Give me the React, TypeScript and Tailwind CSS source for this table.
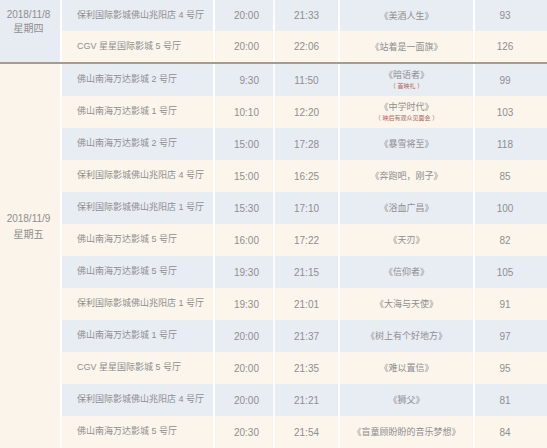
import React from "react";

type Row = {
  cinema: string;
  start: string;
  end: string;
  film: string;
  sub?: string;
  mins: string;
};

const g1: Row[] = [
  { cinema: "保利国际影城佛山兆阳店 4 号厅", start: "20:00", end: "21:33", film: "《美酒人生》", mins: "93" },
  { cinema: "CGV 星星国际影城 5 号厅", start: "20:00", end: "22:06", film: "《站着是一面旗》", mins: "126" },
];

const g2: Row[] = [
  { cinema: "佛山南海万达影城 2 号厅", start: "9:30", end: "11:50", film: "《暗语者》", sub: "（ 首映礼 ）", mins: "99" },
  { cinema: "佛山南海万达影城 1 号厅", start: "10:10", end: "12:20", film: "《中学时代》", sub: "（ 映后有观众见面会 ）", mins: "103" },
  { cinema: "佛山南海万达影城 2 号厅", start: "15:00", end: "17:28", film: "《暴雪将至》", mins: "118" },
  { cinema: "保利国际影城佛山兆阳店 4 号厅", start: "15:00", end: "16:25", film: "《奔跑吧，刚子》", mins: "85" },
  { cinema: "保利国际影城佛山兆阳店 1 号厅", start: "15:30", end: "17:10", film: "《浴血广昌》", mins: "100" },
  { cinema: "佛山南海万达影城 5 号厅", start: "16:00", end: "17:22", film: "《天刃》", mins: "82" },
  { cinema: "佛山南海万达影城 5 号厅", start: "19:30", end: "21:15", film: "《信仰者》", mins: "105" },
  { cinema: "保利国际影城佛山兆阳店 1 号厅", start: "19:30", end: "21:01", film: "《大海与天使》", mins: "91" },
  { cinema: "佛山南海万达影城 1 号厅", start: "20:00", end: "21:37", film: "《树上有个好地方》", mins: "97" },
  { cinema: "CGV 星星国际影城 5 号厅", start: "20:00", end: "21:35", film: "《难以置信》", mins: "95" },
  { cinema: "保利国际影城佛山兆阳店 4 号厅", start: "20:00", end: "21:21", film: "《狮父》", mins: "81" },
  { cinema: "佛山南海万达影城 5 号厅", start: "20:30", end: "21:54", film: "《盲童顾盼盼的音乐梦想》", mins: "84" },
];

function TableRow({ r, blue, h }: { r: Row; blue: boolean; h: string }) {
  return (
    <div className={`flex ${h} ${blue ? "bg-[#e8ecf3]" : "bg-[#fbf5ec]"}`}>
      <div className="w-[153px] border-r-2 border-white flex items-center pl-[15px] text-[9px] whitespace-nowrap">
        {r.cinema}
      </div>
      <div className="w-[60px] border-r-2 border-white flex items-center justify-end pr-[14px] text-[10px]">
        {r.start}
      </div>
      <div className="w-[65px] border-r-2 border-white flex items-center justify-center text-[10px]">
        {r.end}
      </div>
      <div className="w-[135px] border-r-2 border-white flex flex-col items-center justify-center text-[9px] whitespace-nowrap">
        <div className="leading-[12px]">{r.film}</div>
        {r.sub && <div className="leading-[10px] text-[6px] text-[#b0675d]">{r.sub}</div>}
      </div>
      <div className="flex-1 flex items-center justify-center pr-[12px] text-[10px]">{r.mins}</div>
    </div>
  );
}

export default function App() {
  return (
    <div
      className="w-[547px] h-[448px] overflow-hidden text-[#8f8f8f]"
      style={{ fontFamily: '"Liberation Sans", "Noto Sans CJK SC", sans-serif' }}
    >
      <div className="flex">
        <div className="w-[62px] border-r-2 border-white bg-[#e7ebf2] flex flex-col items-center pt-[8px] pr-[3px] text-[10px] leading-[14px]">
          <div>2018/11/8</div>
          <div>星期四</div>
        </div>
        <div className="flex-1 flex flex-col">
          {g1.map((r, i) => (
            <TableRow key={i} r={r} blue={i % 2 === 0} h="h-[31px]" />
          ))}
        </div>
      </div>
      <div className="h-[2px] bg-[#a59c8f]" />
      <div className="flex">
        <div className="w-[62px] border-r-2 border-white bg-[#faf4ea] flex flex-col items-center pt-[147px] pr-[3px] text-[10px] leading-[16px]">
          <div>2018/11/9</div>
          <div>星期五</div>
        </div>
        <div className="flex-1 flex flex-col">
          {g2.map((r, i) => (
            <TableRow key={i} r={r} blue={i % 2 === 0} h="h-[32px]" />
          ))}
        </div>
      </div>
    </div>
  );
}
